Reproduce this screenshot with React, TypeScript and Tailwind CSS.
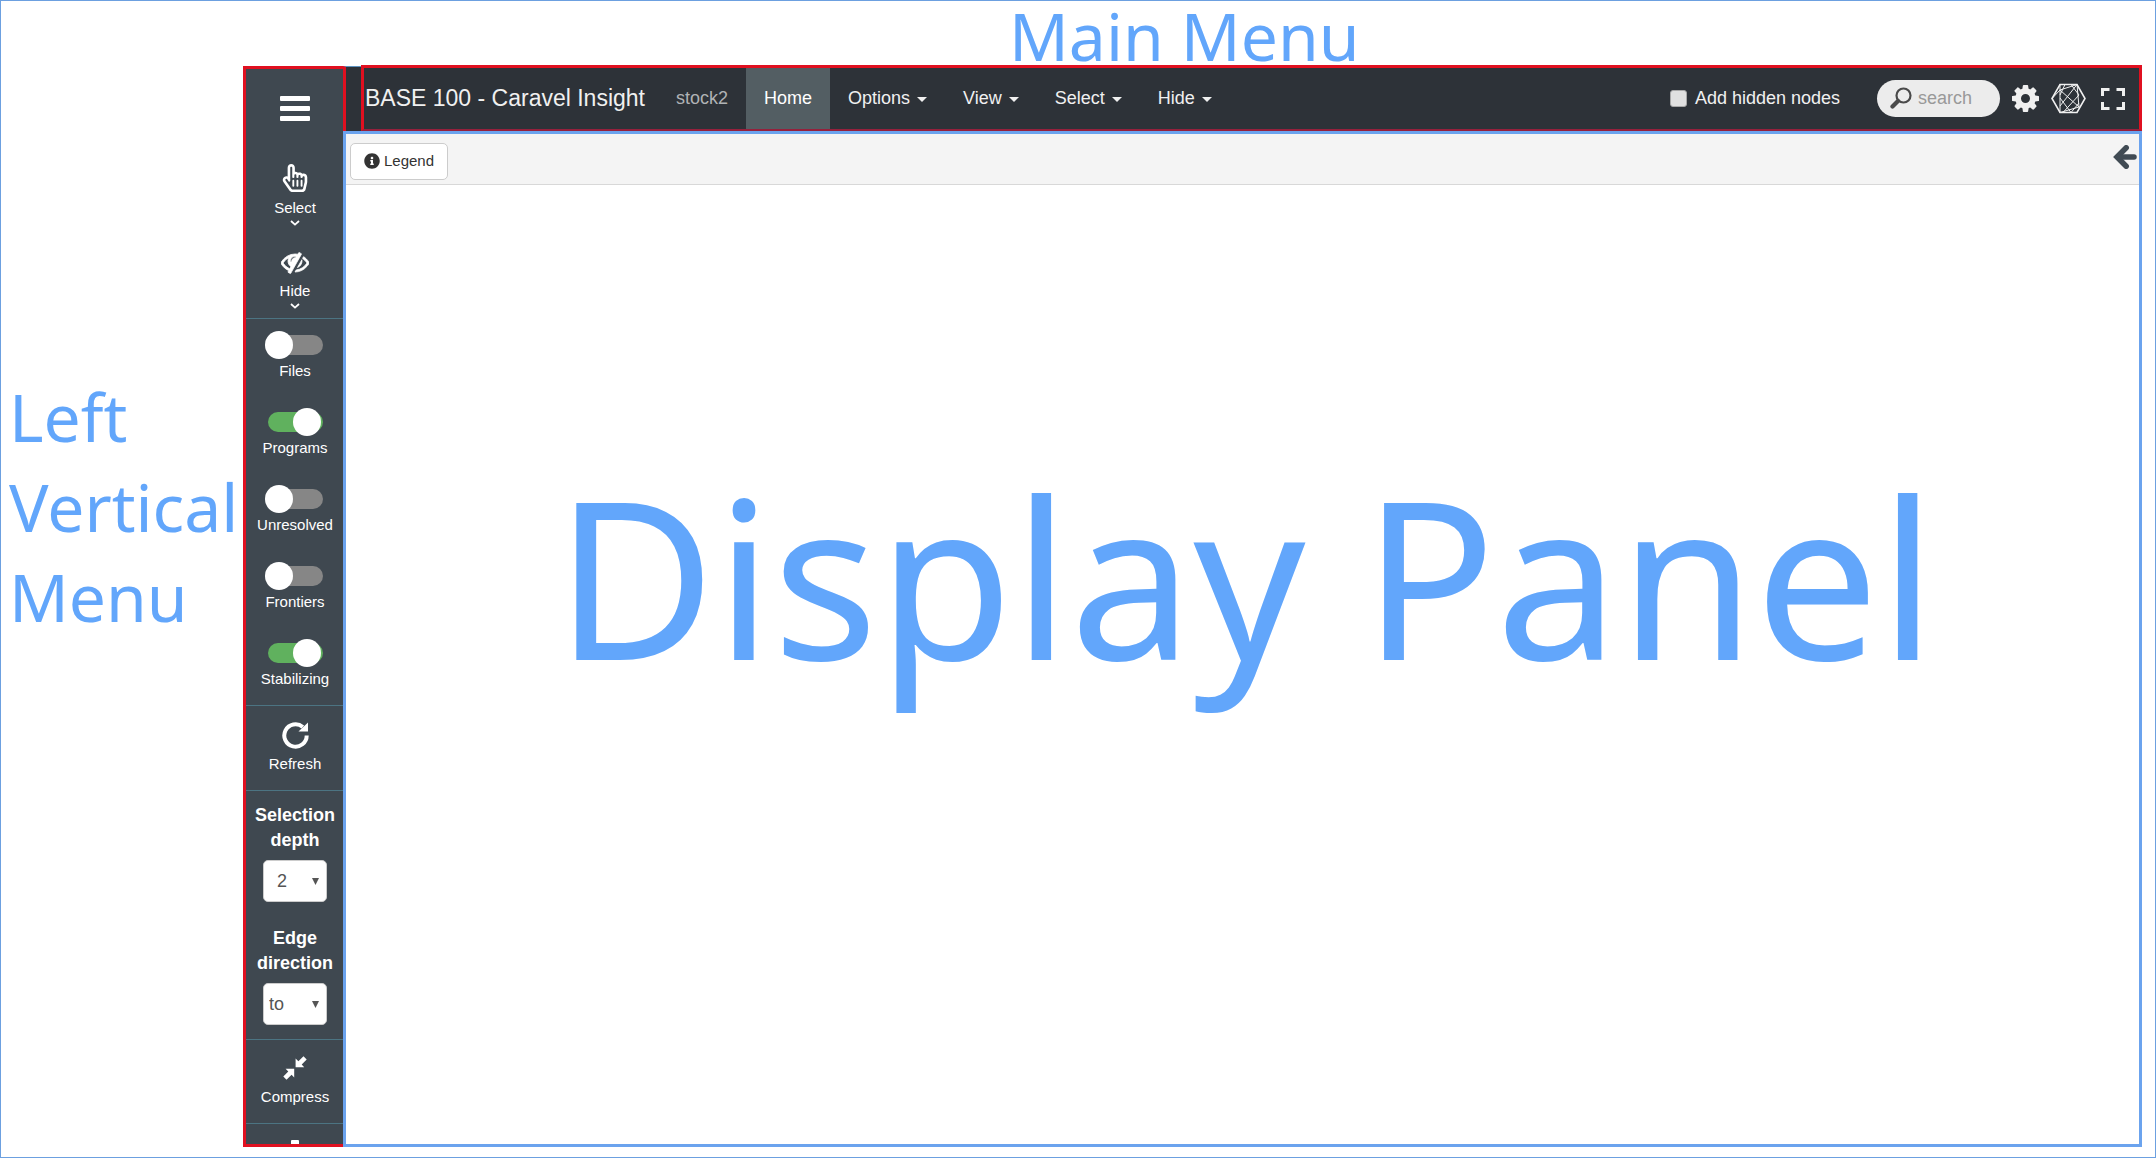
import React from "react";
import { FaRegHandPointer, FaInfoCircle } from "react-icons/fa";

type IconProps = { className?: string };

const EyeSlash = ({ className }: IconProps) => (
  <svg viewBox="0 0 1792 1792" fill="currentColor" className={className} aria-hidden="true">
    <path d="M555 1335l78-141q-87-63-136-159t-49-203q0-121 61-225-229 117-381 353 167 258 427 375zm389-759q0-20-14-34t-34-14q-125 0-214.500 89.500t-89.500 214.500q0 20 14 34t34 14 34-14 14-34q0-86 61-147t147-61q20 0 34-14t14-34zm363-191q0 7-1 9-106 189-316 567t-315 566l-49 89q-10 16-28 16-12 0-134-70-16-10-16-28 0-12 44-87-143-65-263.500-173t-208.500-245q-20-31-20-69t20-69q153-235 380-371t496-136q89 0 180 17l54-97q10-16 28-16 5 0 18 6t31 15.500 33 18.500 31.500 18.500 19.500 11.500q16 10 16 27zm37 447q0 139-79 253.500t-209 164.500l280-502q8 45 8 84zm448 128q0 35-20 69-39 64-109 145-150 172-347.500 267t-419.500 95l74-132q212-18 392.500-137t301.500-307q-115-179-282-294l63-112q95 64 182.500 153t144.500 184q20 34 20 69z" stroke="currentColor" strokeWidth="50" />
  </svg>
);

const Cog = ({ className }: IconProps) => (
  <svg viewBox="128 128 1536 1536" fill="currentColor" className={className} aria-hidden="true">
    <path d="M1152 896q0-106-75-181t-181-75-181 75-75 181 75 181 181 75 181-75 75-181zm512-109v222q0 12-8 23t-20 13l-185 28q-19 54-39 91 35 50 107 138 10 12 10 25t-9 23q-27 37-99 108t-94 71q-12 0-26-9l-138-108q-44 23-91 38-16 136-29 186-7 28-36 28h-222q-14 0-24.500-8.500t-11.500-21.500l-28-184q-49-16-90-37l-141 107q-10 9-25 9-14 0-25-11-126-114-165-168-7-10-7-23 0-12 8-23 15-21 51-66.500t54-70.500q-27-50-41-99l-183-27q-13-2-21-12.500t-8-23.500v-222q0-12 8-23t19-13l186-28q14-46 39-92-40-57-107-138-10-12-10-24 0-10 9-23 26-36 98.500-107.500t94.500-71.500q13 0 26 10l138 107q44-23 91-38 16-136 29-186 7-28 36-28h222q14 0 24.500 8.500t11.500 21.500l28 184q49 16 90 37l142-107q9-9 24-9 13 0 25 10 129 119 165 170 7 8 7 22 0 12-8 23-15 21-51 66.500t-54 70.500q26 50 41 98l183 28q13 2 21 12.500t8 23.500z" />
  </svg>
);

const Repeat = ({ className }: IconProps) => (
  <svg viewBox="0 0 27 27" className={className} aria-hidden="true">
    <path d="M24.700 13.500A11.200 11.200 0 1 1 20.800 5" fill="none" stroke="currentColor" strokeWidth="4" />
    <path d="M26 0.500V9.500H16.500Z" fill="currentColor" />
  </svg>
);

const ResizeSmall = ({ className }: IconProps) => (
  <svg viewBox="0 0 24 24" fill="currentColor" className={className} aria-hidden="true">
    <path d="M20.500 0.300L23.700 3.500L18.700 8.500L21.200 11.200H12.600V2.600L15.400 5.300Z" />
    <path d="M3.500 23.700L0.300 20.500L5.300 15.500L2.600 12.800H11.200V21.400L8.600 18.700Z" />
  </svg>
);

const Hexagon = ({ className }: IconProps) => (
  <svg viewBox="0 0 35 31" fill="none" stroke="currentColor" className={className} aria-hidden="true">
    <path d="M9 1.500H26L34 15.500L26 29.500H9L1 15.500Z" strokeWidth="1.600" />
    <path d="M9 1.500V29.500M26 1.500L9 23M9 7L28 24M26 1.500L9 7M9 7L1 15.500M26 1.500L28 24L9 29.500M20 1.500L28 12L12 29.500M9 15L20 29.500L28 20M14 1.500L9 12" strokeWidth="1" />
  </svg>
);

const Fullscreen = ({ className }: IconProps) => (
  <svg viewBox="0 0 24 22" fill="none" stroke="currentColor" strokeWidth="3" className={className} aria-hidden="true">
    <path d="M1.500 8V1.500H8.500M15.500 1.500H22.500V8M22.500 14V20.500H15.500M8.500 20.500H1.500V14" />
  </svg>
);

const Magnifier = ({ className }: IconProps) => (
  <svg viewBox="0 0 22 22" fill="none" stroke="currentColor" strokeLinecap="round" className={className} aria-hidden="true">
    <circle cx="13.500" cy="8.500" r="7" strokeWidth="2.200" />
    <path d="M8 14L2.500 19.500" strokeWidth="4.200" />
  </svg>
);

const ArrowLeft = ({ className }: IconProps) => (
  <svg viewBox="0 0 24 24" fill="none" stroke="currentColor" strokeWidth="5.500" className={className} aria-hidden="true">
    <path d="M13.200 2.800L4 12L13.200 21.200" strokeLinecap="round" />
    <path d="M5 12H21" strokeLinecap="round" />
  </svg>
);

const Chevron = () => (
  <svg viewBox="0 0 10 6" className="h-[6px] w-[10px]" fill="none" stroke="currentColor" strokeWidth="1.800" aria-hidden="true">
    <path d="M1 1L5 4.600L9 1" />
  </svg>
);

const Caret = () => (
  <svg viewBox="0 0 10 5" className="mt-[2px] ml-[7px] h-[5px] w-[10px]" fill="currentColor" aria-hidden="true">
    <path d="M0 0H10L5 5Z" />
  </svg>
);

function Toggle({ label, on }: { label: string; on: boolean }) {
  return (
    <label className="flex cursor-pointer flex-col items-center">
      <span className="relative my-1 flex h-5 w-[55px] items-center">
        <input
          type="checkbox"
          defaultChecked={on}
          className="peer h-5 w-[55px] appearance-none rounded-full bg-[#868686] checked:bg-[#60b15e]"
        />
        <span className="pointer-events-none absolute -top-1 -left-[3px] size-7 rounded-full bg-white peer-checked:left-[25px]" />
      </span>
      <span className="leading-6">{label}</span>
    </label>
  );
}

function DepthSelect({ id, label, value, options, indent }: { id: string; label: string; value: string; options: string[]; indent: string }) {
  return (
    <div className="flex flex-col items-center">
      <label htmlFor={id} className="w-20 text-center text-[18px] leading-[25px] font-bold">
        {label}
      </label>
      <div className="relative mt-[7px] text-[#555]">
        <select
          id={id}
          defaultValue={value}
          className={`h-[42px] w-16 appearance-none rounded-[5px] border border-[#ccc] bg-white text-[18px] ${indent}`}
        >
          {options.map((o) => (
            <option key={o}>{o}</option>
          ))}
        </select>
        <svg viewBox="0 0 8 8" className="pointer-events-none absolute top-[18px] right-2 h-[7px] w-[7px]" fill="currentColor" aria-hidden="true">
          <path d="M0 0H8L4 8Z" />
        </svg>
      </div>
    </div>
  );
}

function Sidebar() {
  return (
    <aside className="mt-px flex w-[101px] shrink-0 flex-col overflow-hidden border-3 border-r-0 border-[#e01020] bg-[#3f4850] text-[15px] text-white">
      <button aria-label="Toggle menu" className="mx-auto mt-[27px] flex h-[25px] w-[30px] shrink-0 flex-col justify-between">
        <span className="h-[5px] w-full rounded-[1px] bg-white" />
        <span className="h-[5px] w-full rounded-[1px] bg-white" />
        <span className="h-[5px] w-full rounded-[1px] bg-white" />
      </button>
      <button className="mt-[43px] flex shrink-0 flex-col items-center">
        <FaRegHandPointer className="size-[28px]" />
        <span className="mt-1 leading-6">Select</span>
        <Chevron />
      </button>
      <button className="mt-[22px] flex h-[70px] shrink-0 flex-col items-center">
        <EyeSlash className="size-[28px]" />
        <span className="mt-[3px] leading-6">Hide</span>
        <Chevron />
      </button>
      <div className="flex shrink-0 flex-col gap-[25px] border-y border-[#4c7482] pt-3 pb-[14px]">
        <Toggle label="Files" on={false} />
        <Toggle label="Programs" on />
        <Toggle label="Unresolved" on={false} />
        <Toggle label="Frontiers" on={false} />
        <Toggle label="Stabilizing" on />
      </div>
      <button className="flex h-[85px] shrink-0 flex-col items-center border-b border-[#4c7482] pt-4">
        <Repeat className="size-[27px]" />
        <span className="mt-[3px] leading-6">Refresh</span>
      </button>
      <div className="flex h-[249px] shrink-0 flex-col gap-6 border-b border-[#4c7482] pt-3">
        <DepthSelect id="depth" label="Selection depth" value="2" options={["1", "2", "3"]} indent="pl-[13px]" />
        <DepthSelect id="direction" label="Edge direction" value="to" options={["to", "from"]} indent="pl-[5px]" />
      </div>
      <button className="flex h-[84px] shrink-0 flex-col items-center border-b border-[#4c7482] pt-4">
        <ResizeSmall className="size-6" />
        <span className="mt-[5px] leading-6">Compress</span>
      </button>
      <button aria-label="Expand" className="flex shrink-0 justify-center pt-4">
        <span className="h-6 w-2 rounded-[1px] bg-white" />
      </button>
    </aside>
  );
}

const menus = ["Options", "View", "Select", "Hide"];

function MainMenu() {
  return (
    <div className="flex h-[66px] shrink-0">
      <div className="mt-px w-[18px] border-t border-l-3 border-t-[#5d93c0] border-l-[#e01020] bg-[#2d3238]" />
      <nav className="flex flex-1 items-center border-3 border-b-2 border-[#e01020] border-b-[#96203c] bg-[#2d3238] text-[18px] text-[#f0f0f0]">
        <a href="#" className="pr-[13px] pl-px text-[23px] whitespace-nowrap">BASE 100 - Caravel Insight</a>
        <span className="px-[18px] text-[#b0b3b5]">stock2</span>
        <a href="#" className="flex h-full items-center bg-[#535e63] px-[18px] text-white">Home</a>
        {menus.map((m) => (
          <button key={m} className="flex h-full items-center px-[18px]">
            {m}
            <Caret />
          </button>
        ))}
        <label className="ml-auto flex items-center gap-2 whitespace-nowrap">
          <input type="checkbox" className="size-[17px] appearance-none rounded-[3px] border border-[#a8a8a8] bg-[#e0e0e0] checked:bg-blue-500" />
          Add hidden nodes
        </label>
        <div className="relative ml-[37px]">
          <input
            type="text"
            aria-label="search"
            placeholder="search"
            className="block h-[37px] w-[123px] rounded-full bg-[#ececec] pr-3 pl-[41px] text-[18px] text-[#444] placeholder:text-[#999]"
          />
          <Magnifier className="pointer-events-none absolute top-[7px] left-[13px] size-[22px] text-[#4a4a4a]" />
        </div>
        <button aria-label="Settings" className="ml-3">
          <Cog className="size-[27px]" />
        </button>
        <button aria-label="Graph" className="ml-3">
          <Hexagon className="h-[31px] w-[35px]" />
        </button>
        <button aria-label="Fullscreen" className="mr-[14px] ml-[15px]">
          <Fullscreen className="h-[22px] w-6" />
        </button>
      </nav>
    </div>
  );
}

export default function App() {
  return (
    <div className="flex h-screen flex-col overflow-hidden border border-[#6ca0e0] bg-white font-['Liberation_Sans',Arial,sans-serif]">
      <header className="h-16 shrink-0 pl-[1008px] font-['Noto_Sans',sans-serif] text-[66px] leading-[68px] whitespace-nowrap text-[#62a6fb]">
        Main Menu
      </header>
      <div className="flex min-h-0 flex-1 pr-[13px] pb-[10px]">
        <div className="w-[242px] shrink-0 pt-[306px] pl-2 font-['Noto_Sans',sans-serif] text-[66px] leading-[90px] text-[#62a6fb]">
          Left
          <br />
          Vertical
          <br />
          Menu
        </div>
        <Sidebar />
        <div className="z-10 -ml-px flex min-w-0 flex-1 flex-col">
          <MainMenu />
          <main className="flex min-h-0 flex-1 flex-col border-3 border-[#6ba3ee]">
            <div className="flex h-[51px] shrink-0 items-center justify-between border-b border-[#d8d8d8] bg-[#f4f4f4] pt-1 pr-[2px] pl-1">
              <button className="flex h-[37px] items-center gap-1 rounded-[5px] border border-[#ccc] bg-white px-[13px] text-[15px] text-[#333]">
                <FaInfoCircle className="size-4" />
                Legend
              </button>
              <button aria-label="Open panel" className="pb-2 text-[#414b54]">
                <ArrowLeft className="size-6" />
              </button>
            </div>
            <div className="flex flex-1 justify-center pt-[250px] pl-[6px] font-['Noto_Sans',sans-serif] text-[220px] leading-[280px] whitespace-nowrap text-[#62a6fb]">
              Display Panel
            </div>
          </main>
        </div>
      </div>
    </div>
  );
}
